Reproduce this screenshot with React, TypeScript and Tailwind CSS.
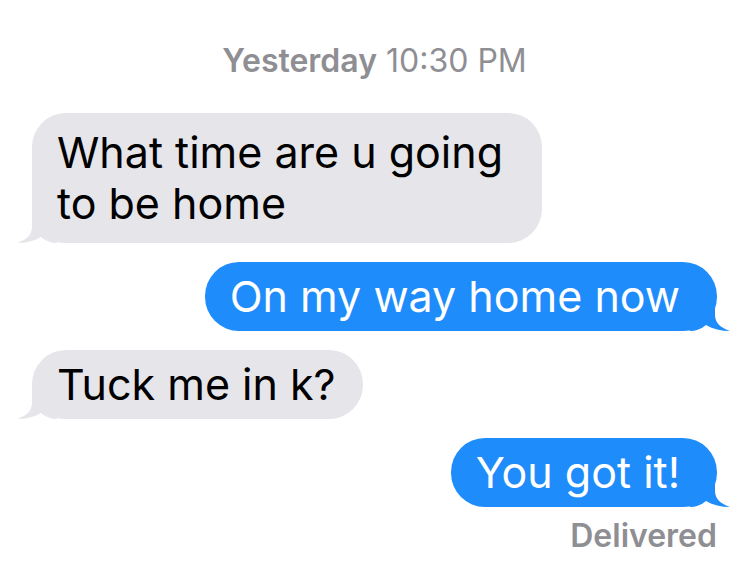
import React from "react";

const GRAY = "#e5e5ea";
const BLUE = "#1f8cfc";

function Tail({ side, color }: { side: "left" | "right"; color: string }) {
  return (
    <svg
      className={
        side === "left"
          ? "absolute left-[-15px] bottom-0"
          : "absolute right-[-13px] bottom-0 -scale-x-100"
      }
      width="40"
      height="34"
      viewBox="0 0 40 34"
    >
      <path
        d="M15,0 L15,18 C15,26 9,31 0,34 C9,34 17,32 24,28 C29,32 34,34 40,34 L40,0 Z"
        fill={color}
      />
    </svg>
  );
}

function Received({ children, cls = "" }: { children: React.ReactNode; cls?: string }) {
  return (
    <div className="flex justify-start">
      <div
        className={
          "relative rounded-[34px] bg-[#e5e5ea] pl-[25px] pr-[27px] text-black " + cls
        }
      >
        <Tail side="left" color={GRAY} />
        <span className="relative">{children}</span>
      </div>
    </div>
  );
}

function Sent({ children }: { children: React.ReactNode }) {
  return (
    <div className="flex justify-end">
      <div className="relative rounded-[34px] bg-[#1f8cfc] pl-[25px] pr-[37px] py-[9px] text-white leading-[51px]">
        <Tail side="right" color={BLUE} />
        <span className="relative">{children}</span>
      </div>
    </div>
  );
}

export default function App() {
  return (
    <div
      className="w-[745px] h-[575px] bg-white overflow-hidden pl-[32px] pr-[28px] pt-[42px]"
      style={{ fontFamily: "Inter, 'Noto Sans', sans-serif" }}
    >
      <div className="text-center text-[32px] leading-[38px] text-[#8e8e93]">
        <span className="font-semibold">Yesterday</span> 10:30 PM
      </div>
      <div className="mt-[33px] flex flex-col gap-[19px] text-[43px]">
        <Received cls="max-w-[510px] py-[14px] leading-[51px]">
          What time are u going to be home
        </Received>
        <Sent>On my way home now</Sent>
        <Received cls="py-[9px] leading-[51px]">Tuck me in k?</Received>
        <Sent>You got it!</Sent>
      </div>
      <div className="mt-[10px] text-right text-[32px] leading-[38px] font-semibold text-[#8e8e93]">
        Delivered
      </div>
    </div>
  );
}
